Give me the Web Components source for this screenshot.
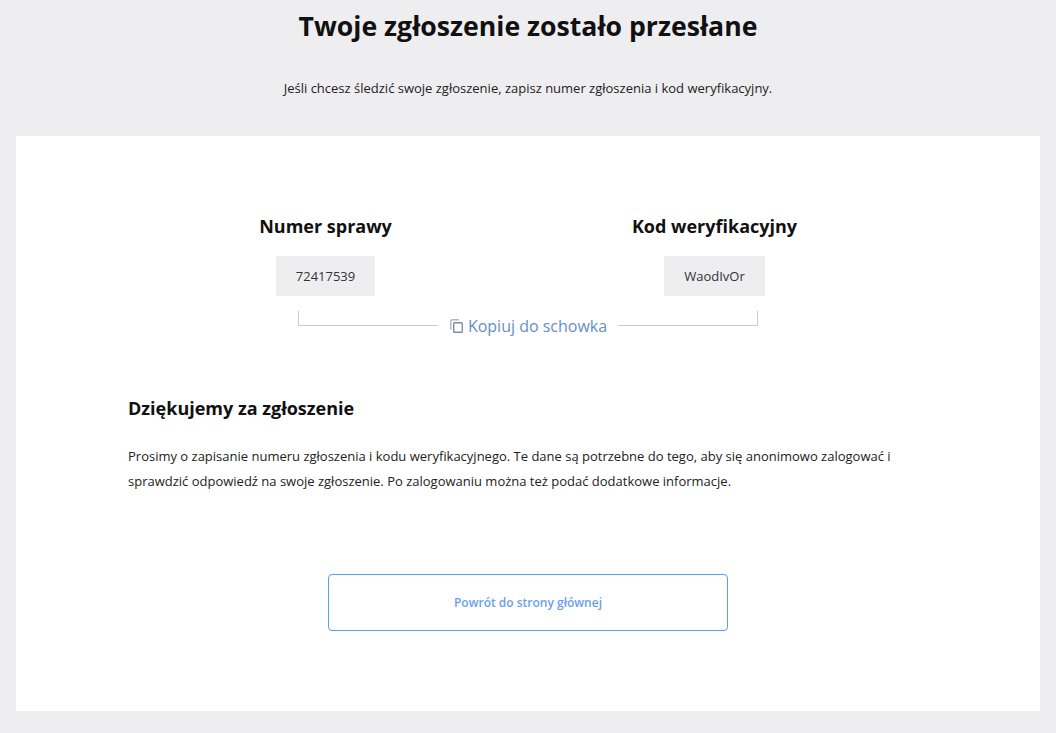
<!DOCTYPE html>
<html lang="pl">
<head>
<meta charset="utf-8">
<title>Zgłoszenie</title>
<style>
  html, body { margin: 0; background: #eeeef0; }
  body { font-family: "Open Sans", sans-serif; color: #111; height: 733px; overflow: hidden; }
</style>
</head>
<body>
<report-page>
  <report-header heading="Twoje zgłoszenie zostało przesłane">Jeśli chcesz śledzić swoje zgłoszenie, zapisz numer zgłoszenia i kod weryfikacyjny.</report-header>
  <report-card>
    <div class="codes">
      <code-field label="Numer sprawy" value="72417539"></code-field>
      <code-field label="Kod weryfikacyjny" value="WaodIvOr"></code-field>
    </div>
    <copy-link>Kopiuj do schowka</copy-link>
    <thanks-note heading="Dziękujemy za zgłoszenie">Prosimy o zapisanie numeru zgłoszenia i kodu weryfikacyjnego. Te dane są potrzebne do tego, aby się anonimowo zalogować i sprawdzić odpowiedź na swoje zgłoszenie. Po zalogowaniu można też podać dodatkowe informacje.</thanks-note>
    <back-button>Powrót do strony głównej</back-button>
  </report-card>
</report-page>

<script>
class ReportPage extends HTMLElement {
  constructor() {
    super();
    this.attachShadow({ mode: "open" });
    this.shadowRoot.innerHTML = `
      <style>
        :host { display: block; padding: 0 16px; }
      </style>
      <slot></slot>
    `;
  }
}

class ReportHeader extends HTMLElement {
  constructor() {
    super();
    this.attachShadow({ mode: "open" });
    this.shadowRoot.innerHTML = `
      <style>
        :host { display: block; height: 136px; text-align: center; box-sizing: border-box; padding-top: 8px; }
        h1 { margin: 0; font-size: 26.65px; line-height: 37px; font-weight: 700; color: #111; }
        p { margin: 33px 0 0; font-size: 13px; line-height: 20px; color: #222; }
      </style>
      <h1></h1>
      <p><slot></slot></p>
    `;
    this.shadowRoot.querySelector("h1").textContent = this.getAttribute("heading");
  }
}

class ReportCard extends HTMLElement {
  constructor() {
    super();
    this.attachShadow({ mode: "open" });
    this.shadowRoot.innerHTML = `
      <style>
        :host { display: block; background: #fff; height: 575px; box-sizing: border-box; padding-top: 76px; }
        ::slotted(.codes) { display: flex; justify-content: center; padding-right: 16px; }
      </style>
      <slot></slot>
    `;
  }
}

class CodeField extends HTMLElement {
  constructor() {
    super();
    this.attachShadow({ mode: "open" });
    this.shadowRoot.innerHTML = `
      <style>
        :host { display: flex; flex-direction: column; align-items: center; width: 389px; }
        h2 { margin: 0; font-size: 18px; line-height: 28px; font-weight: 700; color: #111; }
        div { margin-top: 16px; height: 40px; padding: 0 20px; display: flex; align-items: center;
              background: #eeeef0; font-size: 13px; color: #333; }
      </style>
      <h2></h2>
      <div></div>
    `;
    this.shadowRoot.querySelector("h2").textContent = this.getAttribute("label");
    this.shadowRoot.querySelector("div").textContent = this.getAttribute("value");
  }
}

class CopyLink extends HTMLElement {
  constructor() {
    super();
    this.attachShadow({ mode: "open" });
    this.shadowRoot.innerHTML = `
      <style>
        :host { display: flex; width: 460px; margin: 15px auto 0; height: 30px; align-items: flex-start; }
        .arm { flex: 1; height: 15px; box-sizing: border-box; border-bottom: 1px solid #c9cacc; }
        .arm.l { border-left: 1px solid #c9cacc; }
        .arm.r { border-right: 1px solid #c9cacc; }
        a { display: flex; align-items: center; gap: 5px; margin: 4px 11px 0 12px; color: #648fc6;
            font-size: 16px; line-height: 22px; cursor: pointer; }
        svg { width: 13px; height: 14px; display: block; }
      </style>
      <span class="arm l"></span>
      <a>
        <svg viewBox="0 0 13 14" fill="none" stroke-width="1.4">
          <rect x="3.7" y="3.7" width="8.6" height="9.6" rx="0.8" stroke="#7f8ea6"/>
          <path d="M9 0.8H2.2Q0.8 0.8 0.8 2.2V10.5" stroke="#aeb8c8"/>
        </svg>
        <slot></slot>
      </a>
      <span class="arm r"></span>
    `;
  }
}

class ThanksNote extends HTMLElement {
  constructor() {
    super();
    this.attachShadow({ mode: "open" });
    this.shadowRoot.innerHTML = `
      <style>
        :host { display: block; margin: 53px 0 0 112px; width: 780px; }
        h3 { margin: 0; font-size: 18px; line-height: 28px; font-weight: 700; color: #111; }
        p { margin: 22px 0 0; font-size: 13px; line-height: 25px; color: #222; }
      </style>
      <h3></h3>
      <p><slot></slot></p>
    `;
    this.shadowRoot.querySelector("h3").textContent = this.getAttribute("heading");
  }
}

class BackButton extends HTMLElement {
  constructor() {
    super();
    this.attachShadow({ mode: "open" });
    this.shadowRoot.innerHTML = `
      <style>
        :host { display: flex; align-items: center; justify-content: center; box-sizing: border-box;
                width: 400px; height: 57px; margin: 80px auto 0; border: 1px solid #5b9df0;
                border-radius: 4px; color: #6a9ff0; font-size: 12px; font-weight: 600; cursor: pointer; }
      </style>
      <slot></slot>
    `;
  }
}

customElements.define("report-page", ReportPage);
customElements.define("report-header", ReportHeader);
customElements.define("report-card", ReportCard);
customElements.define("code-field", CodeField);
customElements.define("copy-link", CopyLink);
customElements.define("thanks-note", ThanksNote);
customElements.define("back-button", BackButton);
</script>
</body>
</html>
